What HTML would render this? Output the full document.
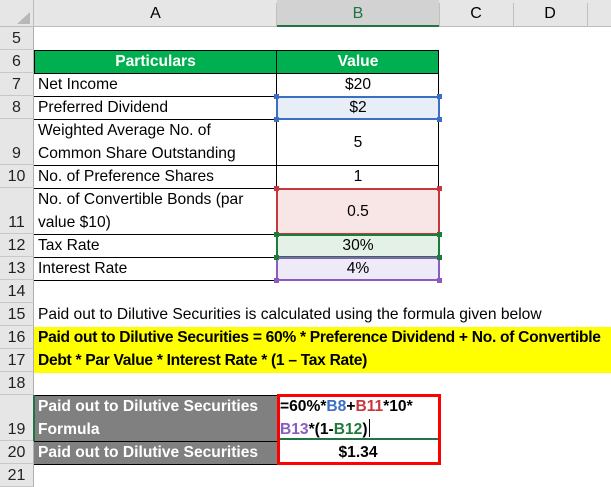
<!DOCTYPE html>
<html><head><style>
*{margin:0;padding:0;box-sizing:border-box}
body{width:611px;height:474px;background:#fff;position:relative;overflow:hidden;font-family:"Liberation Sans",Arial,sans-serif;font-size:15.6px;color:#000}
.a{position:absolute}
.hdr{background:#e6e6e6}
.rn{position:absolute;left:0;width:34px;text-align:center;background:#e6e6e6;border-bottom:1px solid #c8c8c8;border-right:1px solid #b0b0b0;font-size:16px;color:#222;display:flex;align-items:flex-end;justify-content:center;padding-bottom:1px}
.t{position:absolute;white-space:nowrap;line-height:23px}
.c{text-align:center}
.hl{position:absolute;height:1px;background:#000}
.vl{position:absolute;width:1px;background:#000}
.b{font-weight:bold}
</style></head><body>
<div class="a hdr" style="left:0;top:0;width:611px;height:27px;border-bottom:1px solid #bcbcbc"></div>
<div class="a" style="left:0;top:0;width:34px;height:27px;border-right:1px solid #bcbcbc"></div>
<svg class="a" style="left:14px;top:12px" width="16" height="13"><polygon points="16,0 16,12 3,12" fill="#b8b8b8"/></svg>
<div class="a" style="left:277px;top:0;width:162px;height:27px;background:#d2d2d2;border-bottom:2px solid #217346"></div>
<div class="a c" style="left:34px;top:5px;width:243px;font-size:16px">A</div>
<div class="a c" style="left:277px;top:5px;width:162px;font-size:16px;color:#217346">B</div>
<div class="a c" style="left:439px;top:5px;width:74px;font-size:16px">C</div>
<div class="a c" style="left:513px;top:5px;width:74px;font-size:16px">D</div>
<div class="vl" style="left:276px;top:3px;height:24px;background:#c0c0c0"></div>
<div class="vl" style="left:439px;top:3px;height:24px;background:#c0c0c0"></div>
<div class="vl" style="left:513px;top:3px;height:24px;background:#c0c0c0"></div>
<div class="vl" style="left:587px;top:3px;height:24px;background:#c0c0c0"></div>

<div class="rn" style="top:27px;height:23px">5</div>
<div class="rn" style="top:50px;height:23px">6</div>
<div class="rn" style="top:73px;height:23px">7</div>
<div class="rn" style="top:96px;height:23px">8</div>
<div class="rn" style="top:119px;height:46px">9</div>
<div class="rn" style="top:165px;height:23px">10</div>
<div class="rn" style="top:188px;height:46px">11</div>
<div class="rn" style="top:234px;height:23px">12</div>
<div class="rn" style="top:257px;height:23px">13</div>
<div class="rn" style="top:280px;height:23px">14</div>
<div class="rn" style="top:303px;height:23px">15</div>
<div class="rn" style="top:326px;height:23px">16</div>
<div class="rn" style="top:349px;height:23px">17</div>
<div class="rn" style="top:372px;height:23px">18</div>
<div class="rn" style="top:395px;height:46px">19</div>
<div class="rn" style="top:441px;height:23px">20</div>
<div class="rn" style="top:464px;height:23px">21</div>

<div class="a" style="left:34px;top:50px;width:405px;height:24px;background:#00b050;border:1px solid #000"></div>
<div class="vl" style="left:276px;top:50px;height:24px"></div>
<div class="t c b" style="left:34px;top:50px;width:243px;color:#fff">Particulars</div>
<div class="t c b" style="left:277px;top:50px;width:162px;color:#fff">Value</div>

<div class="a" style="left:277px;top:96px;width:162px;height:23px;background:#e8eef8"></div>
<div class="a" style="left:277px;top:188px;width:162px;height:46px;background:#f8e6e6"></div>
<div class="a" style="left:277px;top:234px;width:162px;height:23px;background:#e4f1e6"></div>
<div class="a" style="left:277px;top:257px;width:162px;height:23px;background:#efeaf7"></div>

<div class="hl" style="left:34px;top:96px;width:405px"></div>
<div class="hl" style="left:34px;top:119px;width:405px"></div>
<div class="hl" style="left:34px;top:165px;width:405px"></div>
<div class="hl" style="left:34px;top:188px;width:405px"></div>
<div class="hl" style="left:34px;top:234px;width:405px"></div>
<div class="hl" style="left:34px;top:257px;width:405px"></div>
<div class="hl" style="left:34px;top:280px;width:405px"></div>
<div class="vl" style="left:276px;top:73px;height:207px"></div>
<div class="vl" style="left:438px;top:73px;height:207px"></div>

<div class="a" style="left:276px;top:96px;width:164px;height:24px;border:2px solid #3a6fc4"></div>
<div class="a" style="left:276px;top:188px;width:164px;height:47px;border:2px solid #c5383e"></div>
<div class="a" style="left:276px;top:234px;width:164px;height:24px;border:2px solid #1e7b3a"></div>
<div class="a" style="left:276px;top:257px;width:164px;height:24px;border:2px solid #8a5cc2"></div>
<div class="a" style="left:274px;top:94px;width:5px;height:5px;background:#3a6fc4"></div>
<div class="a" style="left:437px;top:94px;width:5px;height:5px;background:#3a6fc4"></div>
<div class="a" style="left:274px;top:117px;width:5px;height:5px;background:#3a6fc4"></div>
<div class="a" style="left:437px;top:117px;width:5px;height:5px;background:#3a6fc4"></div>
<div class="a" style="left:274px;top:186px;width:5px;height:5px;background:#c5383e"></div>
<div class="a" style="left:437px;top:186px;width:5px;height:5px;background:#c5383e"></div>
<div class="a" style="left:274px;top:232px;width:5px;height:5px;background:#1e7b3a"></div>
<div class="a" style="left:437px;top:232px;width:5px;height:5px;background:#1e7b3a"></div>
<div class="a" style="left:274px;top:255px;width:5px;height:5px;background:#1e7b3a"></div>
<div class="a" style="left:437px;top:255px;width:5px;height:5px;background:#1e7b3a"></div>
<div class="a" style="left:274px;top:278px;width:5px;height:5px;background:#8a5cc2"></div>
<div class="a" style="left:437px;top:278px;width:5px;height:5px;background:#8a5cc2"></div>

<div class="t" style="left:38px;top:73px">Net Income</div>
<div class="t c" style="left:277px;top:73px;width:162px">$20</div>
<div class="t" style="left:38px;top:96px">Preferred Dividend</div>
<div class="t c" style="left:277px;top:96px;width:162px">$2</div>
<div class="t" style="left:38px;top:119px">Weighted Average No. of</div>
<div class="t" style="left:38px;top:142px">Common Share Outstanding</div>
<div class="t c" style="left:277px;top:131px;width:162px">5</div>
<div class="t" style="left:38px;top:165px">No. of Preference Shares</div>
<div class="t c" style="left:277px;top:165px;width:162px">1</div>
<div class="t" style="left:38px;top:188px">No. of Convertible Bonds (par</div>
<div class="t" style="left:38px;top:211px">value $10)</div>
<div class="t c" style="left:277px;top:200px;width:162px">0.5</div>
<div class="t" style="left:38px;top:234px">Tax Rate</div>
<div class="t c" style="left:277px;top:234px;width:162px">30%</div>
<div class="t" style="left:38px;top:257px">Interest Rate</div>
<div class="t c" style="left:277px;top:257px;width:162px">4%</div>

<div class="t" style="left:38px;top:303px">Paid out to Dilutive Securities is calculated using the formula given below</div>
<div class="a" style="left:34px;top:327px;width:577px;height:46px;background:#ffff00"></div>
<div class="t b" style="left:38px;top:326px;letter-spacing:-0.3px">Paid out to Dilutive Securities = 60% * Preference Dividend + No. of Convertible</div>
<div class="t b" style="left:38px;top:349px;letter-spacing:-0.3px">Debt * Par Value * Interest Rate * (1 – Tax Rate)</div>

<div class="a" style="left:34px;top:395px;width:243px;height:69px;background:#808080"></div>
<div class="hl" style="left:34px;top:395px;width:243px"></div>
<div class="hl" style="left:34px;top:441px;width:243px"></div>
<div class="hl" style="left:34px;top:464px;width:243px"></div>
<div class="vl" style="left:33px;top:395px;height:46px;width:2px;background:#217346"></div>
<div class="t b" style="left:38px;top:395px;color:#fff">Paid out to Dilutive Securities</div>
<div class="t b" style="left:38px;top:418px;color:#fff">Formula</div>
<div class="t b" style="left:38px;top:441px;color:#fff">Paid out to Dilutive Securities</div>
<div class="hl" style="left:280px;top:438px;width:158px;height:2px;background:#217346"></div>
<div class="t b" style="left:280px;top:395px">=60%*<span style="color:#3a6fc4">B8</span>+<span style="color:#c5383e">B11</span>*10*</div>
<div class="t b" style="left:280px;top:418px"><span style="color:#8a5cc2">B13</span>*(1-<span style="color:#1e7b3a">B12</span>)<span style="display:inline-block;width:1px;height:18px;background:#000;vertical-align:-3px;margin-left:1px"></span></div>
<div class="t c b" style="left:277px;top:441px;width:162px">$1.34</div>
<div class="a" style="left:277px;top:394px;width:164px;height:71px;border:3px solid #ff0000"></div>
</body></html>
